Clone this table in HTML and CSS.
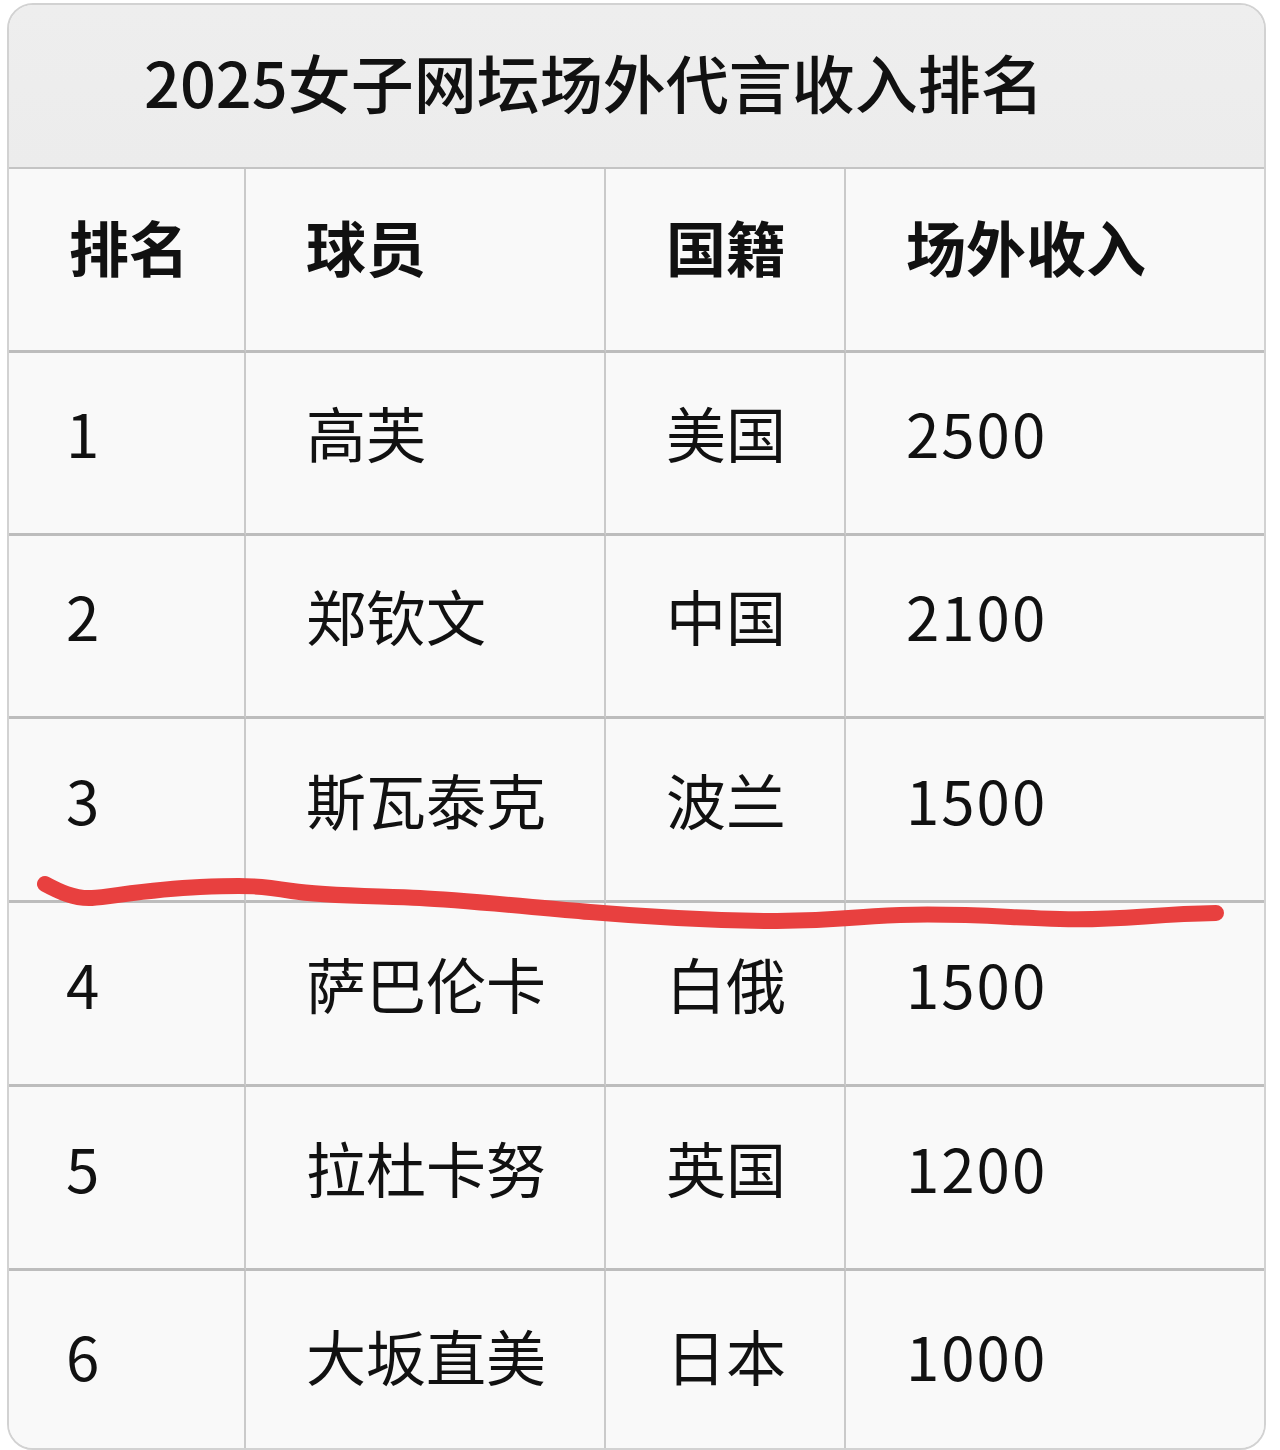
FILE: index.html
```html
<!DOCTYPE html>
<html lang="zh-CN">
<head>
<meta charset="utf-8">
<title>2025女子网坛场外代言收入排名</title>
<link rel="stylesheet" href="styles.css">
</head>
<body>
<div class="page">
  <div class="card">
    <div class="title">2025女子网坛场外代言收入排名</div>
    <div class="grid">
      <div class="cell head">排名</div>
      <div class="cell head">球员</div>
      <div class="cell head">国籍</div>
      <div class="cell head last">场外收入</div>

      <div class="cell num">1</div>
      <div class="cell">高芙</div>
      <div class="cell">美国</div>
      <div class="cell num last">2500</div>

      <div class="cell num">2</div>
      <div class="cell">郑钦文</div>
      <div class="cell">中国</div>
      <div class="cell num last">2100</div>

      <div class="cell num">3</div>
      <div class="cell">斯瓦泰克</div>
      <div class="cell">波兰</div>
      <div class="cell num last">1500</div>

      <div class="cell num">4</div>
      <div class="cell">萨巴伦卡</div>
      <div class="cell">白俄</div>
      <div class="cell num last">1500</div>

      <div class="cell num">5</div>
      <div class="cell">拉杜卡努</div>
      <div class="cell">英国</div>
      <div class="cell num last">1200</div>

      <div class="cell num bottom">6</div>
      <div class="cell bottom">大坂直美</div>
      <div class="cell bottom">日本</div>
      <div class="cell num bottom last">1000</div>
    </div>
  </div>
  <svg class="mark" viewBox="0 0 1280 1450" width="1280" height="1450" aria-hidden="true">
    <path d="M45 884 C58 891, 74 899, 92 898 S150 889, 200 887 S262 886, 292 891 S380 896, 420 898 S520 906, 590 912 S700 920, 765 921 S840 917, 900 915 S1000 917, 1060 919 S1150 914, 1216 913" />
  </svg>
</div>
</body>
</html>
```
FILE: styles.css
```css
html, body {
  margin: 0;
  padding: 0;
  background: #ffffff;
}

body {
  font-family: "Noto Sans CJK SC", "Noto Sans", sans-serif;
  color: #111111;
}

.page {
  position: relative;
  width: 1280px;
  height: 1450px;
  overflow: hidden;
}

.card {
  margin: 3px 0 0 7px;
  width: 1259px;
  height: 1447px;
  box-sizing: border-box;
  border: 2px solid #d2d2d2;
  border-radius: 26px;
  overflow: hidden;
  background: #f9f9f9;
  display: flex;
  flex-direction: column;
}

.title {
  height: 164px;
  box-sizing: border-box;
  background: linear-gradient(#eeeeee, #ececec);
  border-bottom: 2px solid #c4c4c4;
  padding-left: 135px;
  padding-bottom: 12px;
  display: flex;
  align-items: center;
  font-size: 63px;
  font-weight: 500;
  line-height: 1;
}

.grid {
  display: grid;
  grid-template-columns: 237px 360px 240px 1fr;
  grid-template-rows: 184px 183px 183px 184px 184px 184px 1fr;
  flex: 1;
}

.cell {
  box-sizing: border-box;
  border-right: 2px solid #cacaca;
  border-bottom: 3px solid #bdbdbd;
  padding-left: 60px;
  padding-bottom: 22px;
  display: flex;
  align-items: center;
  font-size: 60px;
  line-height: 1;
  font-weight: 400;
  background: #f9f9f9;
}

.cell.num {
  letter-spacing: 2px;
}

.cell.num:first-child,
.grid > .cell.num:nth-child(4n+1) {
  padding-left: 57px;
}

.cell.head {
  font-weight: 700;
  padding-bottom: 28px;
}

.cell.last {
  border-right: none;
}

.cell.bottom {
  border-bottom: none;
  padding-bottom: 10px;
}

.mark {
  position: absolute;
  top: 0;
  left: 0;
  pointer-events: none;
}

.mark path {
  fill: none;
  stroke: #e8403f;
  stroke-width: 16;
  stroke-linecap: round;
  stroke-linejoin: round;
}
```
